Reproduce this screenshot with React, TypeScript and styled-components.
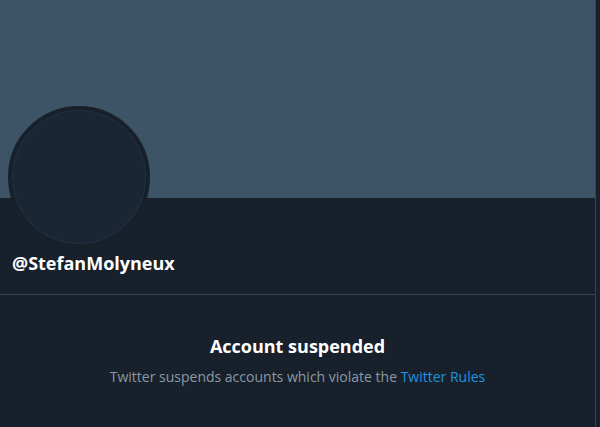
import styled, { createGlobalStyle } from 'styled-components'

const GlobalStyle = createGlobalStyle`
  html, body {
    margin: 0;
    padding: 0;
    background: #18212b;
    font-family: 'Segoe UI', 'Open Sans', 'Noto Sans', sans-serif;
  }
`

const Page = styled.div`
  display: flex;
  min-height: 427px;
`

const Column = styled.main`
  width: 595px;
  border-right: 1px solid #38444d;
  display: flex;
  flex-direction: column;
`

const Banner = styled.div`
  height: 198px;
  background: #3d5466;
`

const ProfileHeader = styled.div`
  display: flex;
  flex-direction: column;
  align-items: flex-start;
  padding: 0 12px;
  border-bottom: 1px solid #38444d;
  height: 96px;
`

const Avatar = styled.div`
  width: 134px;
  height: 134px;
  margin: -92px 0 0 -4px;
  border-radius: 50%;
  border: 4px solid #18212b;
  background: #1a2633;
  box-shadow: inset 0 0 0 1px #223140;
`

const Handle = styled.div`
  margin-top: 3px;
  color: #ffffff;
  font-size: 18px;
  font-weight: 700;
  line-height: 25px;
`

const Suspended = styled.section`
  display: flex;
  flex-direction: column;
  align-items: center;
  padding-top: 39px;
`

const Title = styled.h2`
  margin: 0;
  color: #ffffff;
  font-size: 18px;
  font-weight: 700;
  line-height: 25px;
`

const Note = styled.p`
  margin: 8px 0 0;
  color: #8899a6;
  font-size: 14px;
  line-height: 20px;
`

const Link = styled.a`
  color: #1b95e0;
  text-decoration: none;
`

export default function App() {
  return (
    <>
      <GlobalStyle />
      <Page>
        <Column>
          <Banner />
          <ProfileHeader>
            <Avatar />
            <Handle>@StefanMolyneux</Handle>
          </ProfileHeader>
          <Suspended>
            <Title>Account suspended</Title>
            <Note>
              Twitter suspends accounts which violate the <Link href="#">Twitter Rules</Link>
            </Note>
          </Suspended>
        </Column>
      </Page>
    </>
  )
}
